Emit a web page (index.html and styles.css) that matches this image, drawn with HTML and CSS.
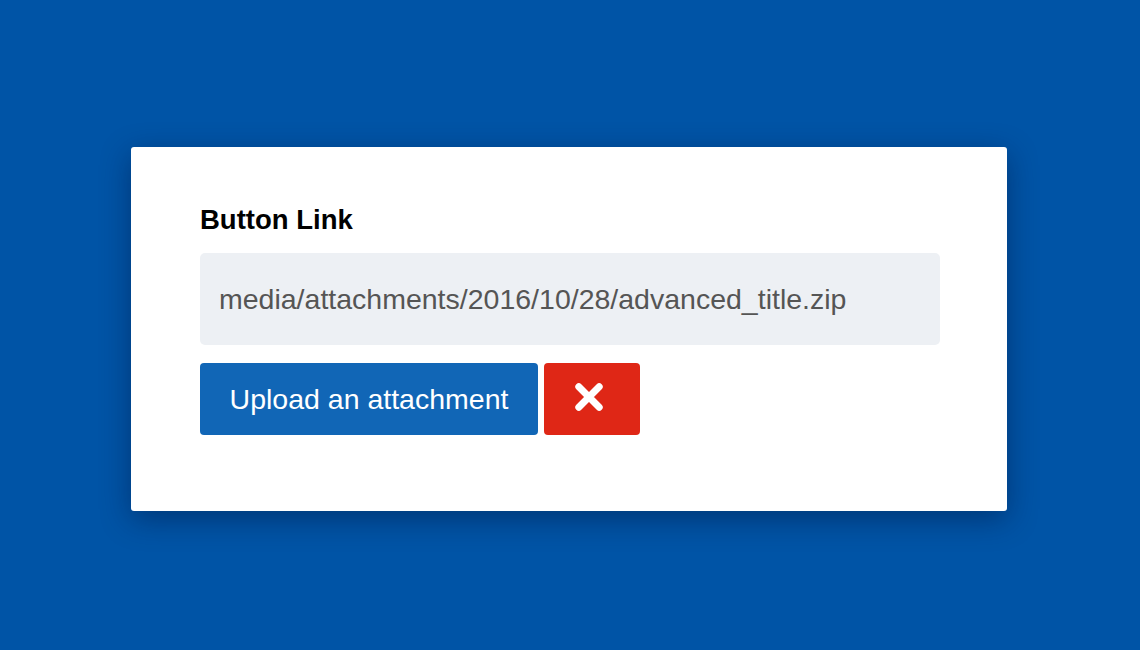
FILE: index.html
```html
<!DOCTYPE html>
<html>
<head>
<meta charset="utf-8">
<link rel="stylesheet" href="styles.css">
</head>
<body>
<div class="stage">
  <div class="card">
    <label class="label">Button Link</label>
    <div class="field">media/attachments/2016/10/28/advanced_title.zip</div>
    <div class="actions">
      <button class="btn btn-upload">Upload an attachment</button>
      <button class="btn btn-remove" aria-label="Remove">
        <svg class="icon-x" width="30" height="30" viewBox="0 0 30 30"><path d="M4.8 4.8 L25.2 25.2 M25.2 4.8 L4.8 25.2" stroke="#fff" stroke-width="7" stroke-linecap="round"/></svg>
      </button>
    </div>
  </div>
</div>
</body>
</html>
```
FILE: styles.css
```css
html, body {
  margin: 0;
  padding: 0;
  width: 1140px;
  height: 650px;
  background: #0054a6;
  font-family: "Liberation Sans", Arial, sans-serif;
}
.stage {
  width: 1140px;
  height: 650px;
  display: flex;
  justify-content: flex-start;
  align-items: flex-start;
  padding: 147px 0 0 131px;
  box-sizing: border-box;
}
.card {
  width: 876px;
  height: 364px;
  box-sizing: border-box;
  background: #fff;
  border-radius: 3px;
  box-shadow: 0 8px 30px rgba(0, 20, 60, 0.45);
  padding: 57px 67px 0 69px;
  display: flex;
  flex-direction: column;
}
.label {
  font-weight: bold;
  font-size: 27.5px;
  line-height: 31px;
  color: #000;
  margin-bottom: 18px;
}
.field {
  height: 92px;
  background: #edf0f4;
  border-radius: 5px;
  color: #555;
  font-size: 28.5px;
  display: flex;
  align-items: center;
  padding-left: 19px;
}
.actions {
  margin-top: 18px;
  display: flex;
  gap: 6px;
}
.btn {
  height: 72px;
  border: none;
  border-radius: 4px;
  color: #fff;
  font-family: inherit;
  display: flex;
  align-items: center;
  justify-content: center;
  padding: 0;
}
.btn-upload {
  width: 338px;
  background: #1166b6;
  font-size: 28.5px;
}
.btn-remove {
  width: 96px;
  background: #df2716;
}
.icon-x {
  margin: 0 7px 4px 0;
}
```
